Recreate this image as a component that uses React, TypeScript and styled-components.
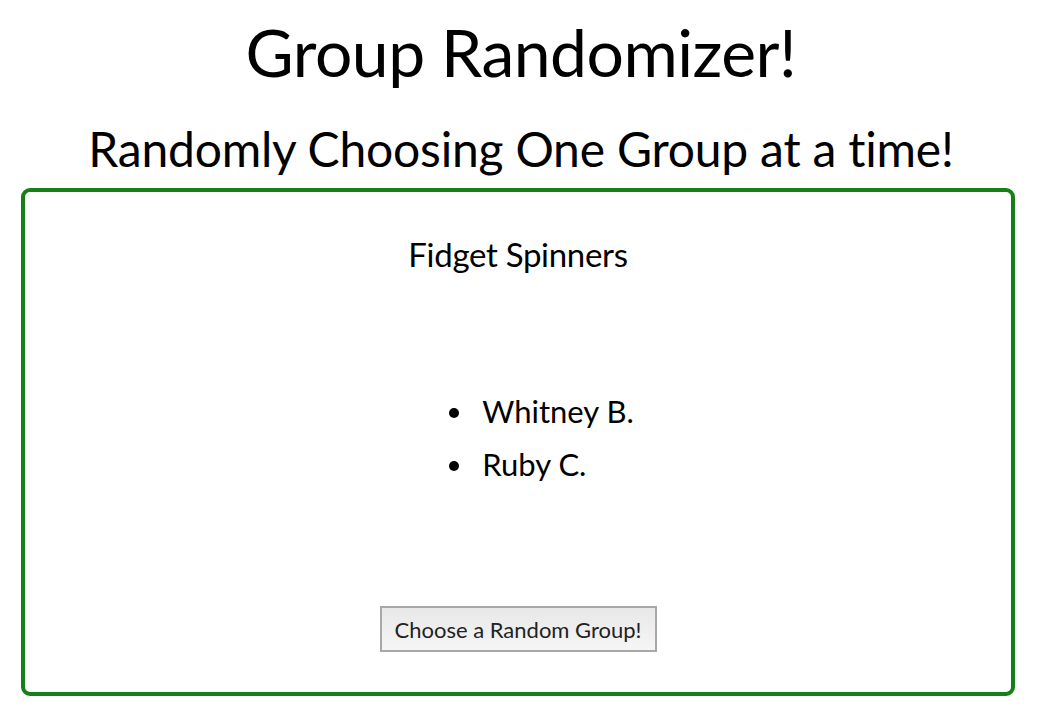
import styled, { createGlobalStyle } from "styled-components";

const Global = createGlobalStyle`
    body {
        margin: 0;
        background: #ffffff;
        font-family: "Lato", "Liberation Sans", sans-serif;
        color: #000;
    }
`;

const Page = styled.div`
    display: flex;
    flex-direction: column;
    align-items: center;
    padding-top: 16px;
`;

const Title = styled.h1`
    margin: 0;
    font-size: 66px;
    line-height: 72px;
    font-weight: 400;
    letter-spacing: -0.5px;
`;

const Subtitle = styled.h2`
    margin: 33px 0 0;
    font-size: 48px;
    line-height: 56px;
    font-weight: 400;
    letter-spacing: -0.2px;
`;

const Card = styled.section`
    box-sizing: border-box;
    width: 994px;
    margin: 11px 0 0 -6px;
    border: 4px solid #168016;
    border-radius: 9px;
    padding: 44px 0 40px;
    display: flex;
    flex-direction: column;
    align-items: center;
`;

const GroupName = styled.h3`
    margin: 0;
    font-size: 33px;
    line-height: 36px;
    font-weight: 400;
    letter-spacing: -0.3px;
`;

const Members = styled.ul`
    margin: 113px 0 0 34px;
    padding-left: 40px;
    font-size: 31px;
    line-height: 53px;
`;

const Member = styled.li`
    padding-left: 6px;
`;

const Button = styled.button`
    margin-top: 115px;
    width: 277px;
    height: 46px;
    border: 2px solid #a8a8a8;
    background: linear-gradient(#e8e8e8, #f5f5f5);
    font-family: "Lato", "Liberation Sans", sans-serif;
    font-size: 22px;
    color: #222;
    cursor: pointer;
`;

const group = { name: "Fidget Spinners", members: ["Whitney B.", "Ruby C."] };

export default function App() {
    return (
        <Page>
            <Global />
            <Title>Group Randomizer!</Title>
            <Subtitle>Randomly Choosing One Group at a time!</Subtitle>
            <Card>
                <GroupName>{group.name}</GroupName>
                <Members>
                    {group.members.map((m) => (
                        <Member key={m}>{m}</Member>
                    ))}
                </Members>
                <Button>Choose a Random Group!</Button>
            </Card>
        </Page>
    );
}
